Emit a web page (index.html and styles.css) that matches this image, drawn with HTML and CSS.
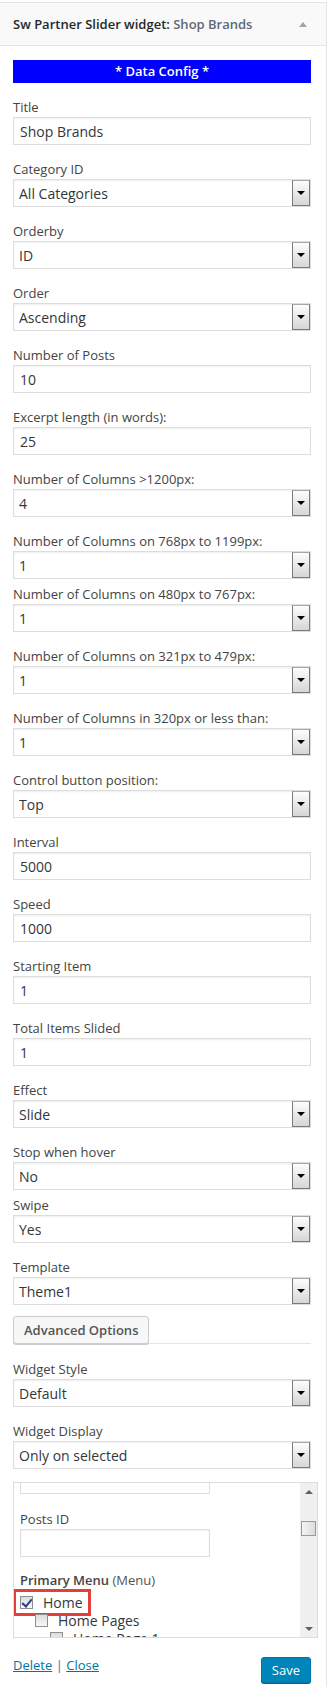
FILE: index.html
```html
<!DOCTYPE html>
<html lang="en">
<head>
  <meta charset="UTF-8">
  <meta name="viewport" content="width=device-width, initial-scale=1.0">
  <title>Sw Partner Slider widget</title>
  <link rel="stylesheet" href="styles.css">
</head>
<body>

<div class="widget">
  <div class="widget-top">
    <h3 class="widget-title">Sw Partner Slider widget:<span class="in-title"> Shop Brands</span></h3>
    <svg class="toggle" width="8" height="5" viewBox="0 0 8 5"><path d="M0 5 L4 0 L8 5 Z" fill="#a0a5aa"/></svg>
  </div>

  <div class="widget-inside">
    <div class="data-config">* Data Config *</div>

    <div class="field">
      <label>Title</label>
      <input type="text" class="text" value="Shop Brands">
    </div>
    <div class="field">
      <label>Category ID</label>
      <div class="select"><select><option>All Categories</option></select><span class="arrow"></span></div>
    </div>
    <div class="field">
      <label>Orderby</label>
      <div class="select"><select><option>ID</option></select><span class="arrow"></span></div>
    </div>
    <div class="field">
      <label>Order</label>
      <div class="select"><select><option>Ascending</option></select><span class="arrow"></span></div>
    </div>
    <div class="field">
      <label>Number of Posts</label>
      <input type="text" class="text" value="10">
    </div>
    <div class="field">
      <label>Excerpt length (in words):</label>
      <input type="text" class="text" value="25">
    </div>
    <div class="field">
      <label>Number of Columns &gt;1200px:</label>
      <div class="select"><select><option>4</option></select><span class="arrow"></span></div>
    </div>
    <div class="field tight">
      <label>Number of Columns on 768px to 1199px:</label>
      <div class="select"><select><option>1</option></select><span class="arrow"></span></div>
    </div>
    <div class="field">
      <label>Number of Columns on 480px to 767px:</label>
      <div class="select"><select><option>1</option></select><span class="arrow"></span></div>
    </div>
    <div class="field">
      <label>Number of Columns on 321px to 479px:</label>
      <div class="select"><select><option>1</option></select><span class="arrow"></span></div>
    </div>
    <div class="field">
      <label>Number of Columns in 320px or less than:</label>
      <div class="select"><select><option>1</option></select><span class="arrow"></span></div>
    </div>
    <div class="field">
      <label>Control button position:</label>
      <div class="select"><select><option>Top</option></select><span class="arrow"></span></div>
    </div>
    <div class="field">
      <label>Interval</label>
      <input type="text" class="text" value="5000">
    </div>
    <div class="field">
      <label>Speed</label>
      <input type="text" class="text" value="1000">
    </div>
    <div class="field">
      <label>Starting Item</label>
      <input type="text" class="text" value="1">
    </div>
    <div class="field">
      <label>Total Items Slided</label>
      <input type="text" class="text" value="1">
    </div>
    <div class="field">
      <label>Effect</label>
      <div class="select"><select><option>Slide</option></select><span class="arrow"></span></div>
    </div>
    <div class="field tight">
      <label>Stop when hover</label>
      <div class="select"><select><option>No</option></select><span class="arrow"></span></div>
    </div>
    <div class="field">
      <label>Swipe</label>
      <div class="select"><select><option>Yes</option></select><span class="arrow"></span></div>
    </div>
    <div class="field last">
      <label>Template</label>
      <div class="select"><select><option>Theme1</option></select><span class="arrow"></span></div>
    </div>

    <!-- advanced -->
    <div class="advanced">
      <button class="button">Advanced Options</button>
    </div>

    <div class="field">
      <label>Widget Style</label>
      <div class="select"><select><option>Default</option></select><span class="arrow"></span></div>
    </div>
    <div class="field">
      <label>Widget Display</label>
      <div class="select"><select><option>Only on selected</option></select><span class="arrow"></span></div>
    </div>

    <!-- display logic box -->
    <div class="scroll-box">
      <div class="scroll-content">
        <div class="cut-input"></div>
        <label class="inner-label">Posts ID</label>
        <input type="text" class="text short">
        <p class="menu-title"><b>Primary Menu</b> (Menu)</p>
        <ul class="menu-list">
          <li class="marked">
            <label class="item"><input type="checkbox" checked> Home</label>
            <span class="highlight"></span>
            <ul>
              <li>
                <label class="item"><input type="checkbox"> Home Pages</label>
                <ul>
                  <li><label class="item"><input type="checkbox"> Home Page 1</label></li>
                </ul>
              </li>
            </ul>
          </li>
        </ul>
      </div>
      <div class="scrollbar">
        <span class="sb-btn up"></span>
        <span class="sb-thumb"></span>
        <span class="sb-space"></span>
        <span class="sb-btn down"></span>
      </div>
    </div>

    <div class="widget-control">
      <div class="links">
        <a href="#">Delete</a> <span class="sep">|</span> <a href="#">Close</a>
      </div>
      <button class="button-primary">Save</button>
    </div>
  </div>
</div>

</body>
</html>
```

FILE: styles.css
```css
/* BASE */
* {
  box-sizing: border-box;
}
body {
  margin: 0;
  background: #fff;
  color: #444;
  font-family: "Open Sans", Arial, sans-serif;
  font-size: 13px;
}

/* WIDGET BOX */
.widget {
  width: 328px;
  margin: 2px 0 0 -1px;
  border: 1px solid #e5e5e5;
  border-bottom: none;
  background: #fff;
}
.widget-top {
  display: flex;
  align-items: center;
  justify-content: space-between;
  height: 43px;
  padding: 0 19px 0 13px;
  background: #f9f9f9;
  border-bottom: 1px solid #e5e5e5;
}
.widget-title {
  margin: 0;
  font-size: 13px;
  font-weight: 600;
  color: #23282d;
}
.in-title {
  color: #606a73;
}
.widget-inside {
  padding: 14px 15px 4px 13px;
}
.data-config {
  height: 23px;
  line-height: 23px;
  margin-bottom: 14px;
  background: #0000ff;
  color: #fff;
  font-weight: 600;
  text-align: center;
}

/* FIELDS */
.field {
  margin-bottom: 14px;
}
.field.tight {
  margin-bottom: 5px;
}
.field.last {
  margin-bottom: 11px;
}
.field label,
.inner-label {
  display: block;
  line-height: 20px;
}
.text {
  display: block;
  width: 100%;
  height: 28px;
  margin: 0;
  padding: 0 6px;
  border: 1px solid #ddd;
  box-shadow: inset 0 1px 2px rgba(0,0,0,0.07);
  background: #fff;
  color: #32373c;
  font-family: inherit;
  font-size: 14px;
  outline: none;
}
.text.short {
  width: 190px;
}
.select {
  display: flex;
  align-items: flex-start;
  height: 28px;
  border: 1px solid #ddd;
  box-shadow: inset 0 1px 2px rgba(0,0,0,0.07);
  background: #fff;
}
.select select {
  flex: 1;
  min-width: 0;
  height: 26px;
  margin: 0;
  padding: 0 5px;
  border: none;
  background: transparent;
  color: #32373c;
  font-family: inherit;
  font-size: 14px;
  -webkit-appearance: none;
  appearance: none;
  outline: none;
}
.arrow {
  display: flex;
  align-items: center;
  justify-content: center;
  width: 18px;
  height: 26px;
  border: 1px solid #7a7a7a;
  border-top-color: #a8a8a8;
  background: linear-gradient(#fdfdfd, #d6d6d6);
}
.arrow::after {
  content: "";
  border-left: 4px solid transparent;
  border-right: 4px solid transparent;
  border-top: 4px solid #000;
}

/* ADVANCED */
.advanced {
  display: flex;
  border-bottom: 1px solid #e5e5e5;
  margin-bottom: 15px;
}
.button {
  height: 28px;
  margin-bottom: -1px;
  padding: 0 10px;
  border: 1px solid #ccc;
  border-radius: 3px;
  background: #f7f7f7;
  box-shadow: 0 1px 0 #ccc;
  color: #555;
  font-family: inherit;
  font-size: 13px;
  font-weight: 600;
}

/* SCROLL BOX */
.scroll-box {
  display: flex;
  height: 156px;
  margin-top: -1px;
  margin-right: -7px;
  border: 1px solid #ddd;
}
.scroll-content {
  flex: 1;
  padding: 0 6px;
  overflow: hidden;
}
.cut-input {
  width: 190px;
  height: 11px;
  border: 1px solid #ddd;
  border-top: none;
}
.inner-label {
  margin-top: 15px;
}
.menu-title {
  margin: 14px 0 4px;
  line-height: 18px;
  color: #555;
}
.menu-title b {
  font-weight: 600;
  color: #444;
}
.menu-list,
.menu-list ul {
  list-style: none;
  margin: 0;
  padding: 0;
}
.menu-list ul {
  padding-left: 15px;
}
.marked {
  position: relative;
}
.item {
  display: flex;
  align-items: center;
  gap: 6px;
  height: 18px;
  font-size: 14px;
  color: #32373c;
}
.item input {
  -webkit-appearance: none;
  appearance: none;
  position: relative;
  width: 13px;
  height: 13px;
  margin: 0 4px 0 0;
  border: 1px solid #8f8f8f;
  background: linear-gradient(#dcdcdc, #f8f8f8);
}
.item input:checked::before {
  content: "";
  position: absolute;
  left: 3px;
  top: 0px;
  width: 4px;
  height: 8px;
  border-right: 2px solid #2b3b8f;
  border-bottom: 2px solid #2b3b8f;
  transform: rotate(40deg);
}
/* red annotation around Home */
.highlight {
  position: absolute;
  left: -7px;
  top: -4px;
  width: 78px;
  height: 27px;
  border: 3px solid #e2403a;
}

/* fake scrollbar */
.scrollbar {
  display: flex;
  flex-direction: column;
  align-items: center;
  width: 17px;
  background: #f0f0f0;
}
.sb-btn {
  display: flex;
  align-items: center;
  justify-content: center;
  width: 17px;
  height: 17px;
}
.sb-btn.up::after {
  content: "";
  border-left: 4px solid transparent;
  border-right: 4px solid transparent;
  border-bottom: 4px solid #606060;
}
.sb-btn.down::after {
  content: "";
  border-left: 4px solid transparent;
  border-right: 4px solid transparent;
  border-top: 4px solid #606060;
}
.sb-thumb {
  width: 15px;
  height: 15px;
  margin-top: 21px;
  border: 1px solid #999;
  background: linear-gradient(90deg, #f4f4f4, #dcdcdc);
}
.sb-space {
  flex: 1;
}

/* FOOTER */
.widget-control {
  display: flex;
  align-items: flex-start;
  justify-content: space-between;
  margin-top: 19px;
}
.links {
  line-height: 16px;
}
.links a {
  color: #0073aa;
  text-decoration: underline;
}
.sep {
  color: #666;
}
.button-primary {
  height: 26px;
  padding: 0 10px;
  border: 1px solid #0073aa;
  border-radius: 3px;
  background: #0085ba;
  box-shadow: 0 1px 0 #006799;
  color: #fff;
  font-family: inherit;
  font-size: 13px;
}
```
